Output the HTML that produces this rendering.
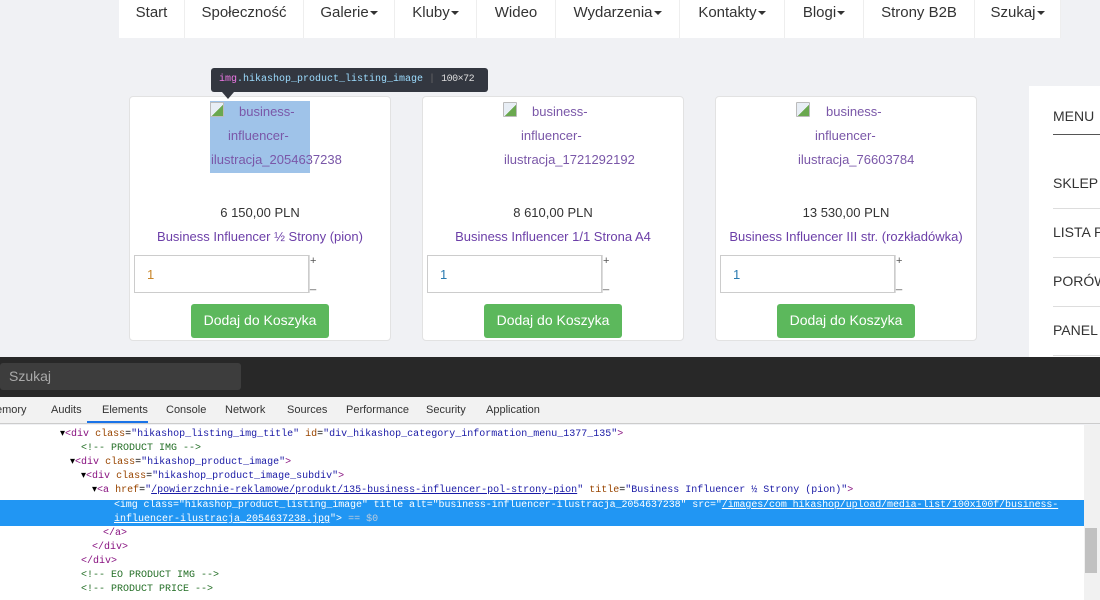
<!DOCTYPE html>
<html><head><meta charset="utf-8"><style>
*{margin:0;padding:0;box-sizing:border-box}
body{width:1100px;height:600px;overflow:hidden;background:#f0f1f4;font-family:"Liberation Sans",sans-serif;position:relative}
.nav{position:absolute;top:0;left:0;width:1100px;height:38px;background:#f0f1f4}
.ni{position:absolute;top:0;height:38px;background:#fff;border-right:1px solid #eee;font-size:15px;color:#333;line-height:24px;padding-top:1px;text-align:center}
.car{display:inline-block;width:0;height:0;border-left:4px solid transparent;border-right:4px solid transparent;border-top:4px solid #333;vertical-align:middle;margin-left:1px}
.card{position:absolute;top:96px;width:262px;height:245px;background:#fff;border:1px solid #e2e2e2;border-radius:4px}
.il{position:absolute;font-size:13px;color:#7a57a8;line-height:24px;white-space:nowrap}
.bi{position:absolute;left:80px;top:5px;width:14px;height:15px;border:1px solid #bbb;border-radius:1px;background:linear-gradient(135deg,#e8eef5 55%,#6aa84f 56%)}
.price{position:absolute;top:108px;width:100%;text-align:center;font-size:13px;color:#333}
.name{position:absolute;top:132px;width:100%;text-align:center;font-size:13px;color:#6c3fa8}
.inp{position:absolute;left:4px;top:158px;width:175px;height:38px;border:1px solid #ccc;font-size:13px;padding:11px 0 0 12px;color:#c8862a}
.pm{position:absolute;left:179px;top:158px;width:10px;height:38px;font-size:11px;color:#555;border-left:1px solid #ddd}
.btn{position:absolute;left:61px;top:207px;width:138px;height:34px;background:#5cb85c;border-radius:3px;color:#fff;font-size:14px;text-align:center;line-height:33px}
.dt{position:absolute;left:0;top:357px;width:1100px;height:40px;background:#282828}
.tabs{position:absolute;left:0;top:397px;width:1100px;height:27px;background:#f2f2f2;border-bottom:1px solid #ccc;font-size:11px;color:#333}
.tabs span{position:absolute;top:7px}
.code{position:absolute;left:0;top:425px;width:1084px;height:175px;background:#fff;font-family:"Liberation Mono",monospace;font-size:10px;white-space:pre}
.l{position:absolute;height:14px;line-height:14px}
.t{color:#881280}.a{color:#994500}.v{color:#1a1aa6}.c{color:#236e25}
</style></head><body>
<div class="nav">
<div class="ni" style="left:119px;width:66px">Start</div>
<div class="ni" style="left:185px;width:119px">Społeczność</div>
<div class="ni" style="left:304px;width:91px">Galerie<span class="car"></span></div>
<div class="ni" style="left:395px;width:82px">Kluby<span class="car"></span></div>
<div class="ni" style="left:477px;width:79px">Wideo</div>
<div class="ni" style="left:556px;width:124px">Wydarzenia<span class="car"></span></div>
<div class="ni" style="left:680px;width:105px">Kontakty<span class="car"></span></div>
<div class="ni" style="left:785px;width:79px">Blogi<span class="car"></span></div>
<div class="ni" style="left:864px;width:111px">Strony B2B</div>
<div class="ni" style="left:975px;width:86px">Szukaj<span class="car"></span></div>
</div>

<div style="position:absolute;left:1029px;top:86px;width:71px;height:271px;background:#fff;font-size:14px;color:#333">
<div style="position:absolute;left:24px;top:22px">MENU</div>
<div style="position:absolute;left:24px;top:48px;width:50px;border-top:1px solid #555"></div>
<div style="position:absolute;left:24px;top:89px">SKLEP</div>
<div style="position:absolute;left:24px;top:122px;width:50px;border-top:1px solid #ddd"></div>
<div style="position:absolute;left:24px;top:138px;white-space:nowrap">LISTA P</div>
<div style="position:absolute;left:24px;top:171px;width:50px;border-top:1px solid #ddd"></div>
<div style="position:absolute;left:24px;top:187px;white-space:nowrap">PORÓW</div>
<div style="position:absolute;left:24px;top:220px;width:50px;border-top:1px solid #ddd"></div>
<div style="position:absolute;left:24px;top:236px;white-space:nowrap">PANEL</div>
<div style="position:absolute;left:24px;top:269px;width:50px;border-top:1px solid #ddd"></div>
</div>

<div class="card" style="left:129px">
<div style="position:absolute;left:80px;top:4px;width:100px;height:72px;background:#9fc3e9"></div>
<div class="bi"></div>
<div class="il" style="left:109px;top:3px">business-</div><div class="il" style="left:98px;top:27px">influencer-</div><div class="il" style="left:81px;top:51px">ilustracja_2054637238</div>
<div class="price">6 150,00 PLN</div><div class="name">Business Influencer ½ Strony (pion)</div>
<div class="inp">1</div><div class="pm">+<br><br>_</div><div class="btn">Dodaj do Koszyka</div></div>
<div class="card" style="left:422px">
<div class="bi"></div>
<div class="il" style="left:109px;top:3px">business-</div><div class="il" style="left:98px;top:27px">influencer-</div><div class="il" style="left:81px;top:51px">ilustracja_1721292192</div>
<div class="price">8 610,00 PLN</div><div class="name">Business Influencer 1/1 Strona A4</div>
<div class="inp" style="color:#2a7ab0">1</div><div class="pm">+<br><br>_</div><div class="btn">Dodaj do Koszyka</div></div>
<div class="card" style="left:715px">
<div class="bi"></div>
<div class="il" style="left:110px;top:3px">business-</div><div class="il" style="left:99px;top:27px">influencer-</div><div class="il" style="left:82px;top:51px">ilustracja_76603784</div>
<div class="price">13 530,00 PLN</div><div class="name">Business Influencer III str. (rozkładówka)</div>
<div class="inp" style="color:#2a7ab0">1</div><div class="pm">+<br><br>_</div><div class="btn">Dodaj do Koszyka</div></div>

<div style="position:absolute;left:211px;top:68px;width:277px;height:24px;background:#333740;border-radius:3px;font-family:'Liberation Mono',monospace;font-size:10px;line-height:24px;padding-left:8px;color:#9cdcfe;white-space:pre"><span style="color:#ee78e6">img</span>.hikashop_product_listing_image <span style="color:#666">|</span> <span style="color:#ddd;letter-spacing:-0.5px">100×72</span></div>
<div style="position:absolute;left:222px;top:92px;border-left:6px solid transparent;border-right:6px solid transparent;border-top:7px solid #333740"></div>

<div class="dt"><div style="position:absolute;left:0;top:6px;width:241px;height:27px;background:#3d3d3d;border-radius:3px;color:#aaa;font-size:14px;line-height:27px;padding-left:9px">Szukaj</div></div>
<div class="tabs"><span style="left:-4px">emory</span><span style="left:51px">Audits</span><span style="left:102px">Elements</span><span style="left:166px">Console</span><span style="left:225px">Network</span><span style="left:287px">Sources</span><span style="left:346px">Performance</span><span style="left:426px">Security</span><span style="left:486px">Application</span>
<div style="position:absolute;left:87px;top:24px;width:61px;height:2px;background:#1a73e8"></div></div>
<div class="code">
<div class="l" style="left:60px;top:3px">▾<span class="t">&lt;div</span> <span class="a">class</span>=<span class="v">"hikashop_listing_img_title"</span> <span class="a">id</span>=<span class="v">"div_hikashop_category_information_menu_1377_135"</span><span class="t">&gt;</span></div>
<div class="l" style="left:81px;top:17px" ><span class="c">&lt;!-- PRODUCT IMG --&gt;</span></div>
<div class="l" style="left:70px;top:31px">▾<span class="t">&lt;div</span> <span class="a">class</span>=<span class="v">"hikashop_product_image"</span><span class="t">&gt;</span></div>
<div class="l" style="left:81px;top:45px">▾<span class="t">&lt;div</span> <span class="a">class</span>=<span class="v">"hikashop_product_image_subdiv"</span><span class="t">&gt;</span></div>
<div class="l" style="left:92px;top:59px">▾<span class="t">&lt;a</span> <span class="a">href</span>=<span class="v">"<u>/powierzchnie-reklamowe/produkt/135-business-influencer-pol-strony-pion</u>"</span> <span class="a">title</span>=<span class="v">"Business Influencer ½ Strony (pion)"</span><span class="t">&gt;</span></div>
<div style="position:absolute;left:0;top:75px;width:1084px;height:26px;background:#2196f3"></div>
<div class="l" style="left:114px;top:74px;color:#fff;letter-spacing:-0.1px">&lt;img class="hikashop_product_listing_image" title alt="business-influencer-ilustracja_2054637238" src="<u>/images/com hikashop/upload/media-list/100x100f/business-</u></div>
<div class="l" style="left:114px;top:88px;color:#fff"><u>influencer-ilustracja_2054637238.jpg</u>"&gt; <span style="color:#bcd">== $0</span></div>
<div class="l" style="left:103px;top:102px"><span class="t">&lt;/a&gt;</span></div>
<div class="l" style="left:92px;top:116px"><span class="t">&lt;/div&gt;</span></div>
<div class="l" style="left:81px;top:130px"><span class="t">&lt;/div&gt;</span></div>
<div class="l" style="left:81px;top:144px"><span class="c">&lt;!-- EO PRODUCT IMG --&gt;</span></div>
<div class="l" style="left:81px;top:158px"><span class="c">&lt;!-- PRODUCT PRICE --&gt;</span></div>
</div>
<div style="position:absolute;left:1084px;top:425px;width:16px;height:175px;background:#f1f1f1"><div style="position:absolute;left:1px;top:103px;width:12px;height:45px;background:#c1c1c1"></div></div>
</body></html>
